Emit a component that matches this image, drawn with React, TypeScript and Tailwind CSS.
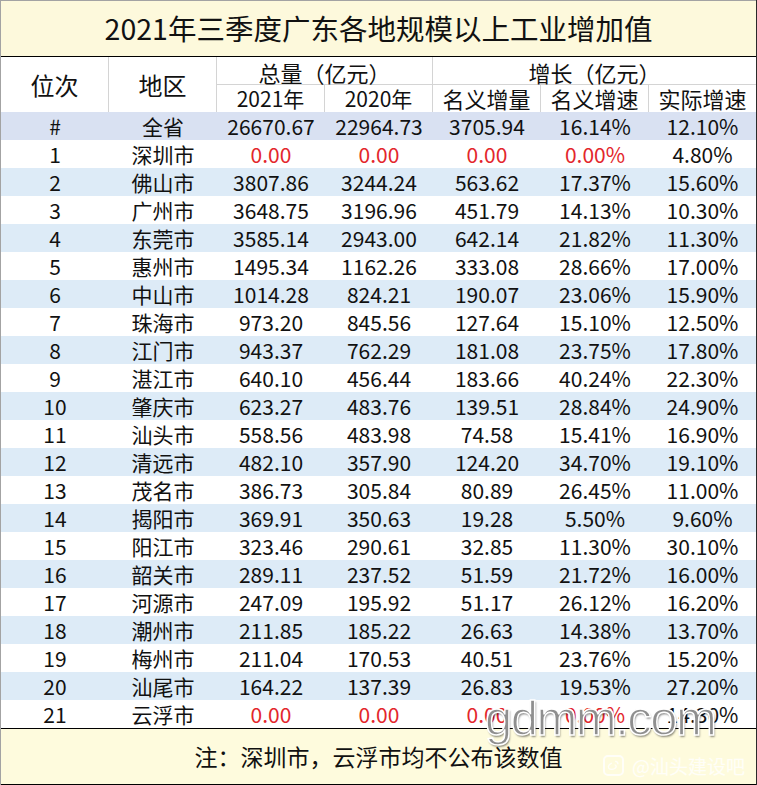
const rows: [string, string, string, string, string, string, string][] = [
    ["1", "深圳市", "0.00", "0.00", "0.00", "0.00%", "4.80%"],
    ["2", "佛山市", "3807.86", "3244.24", "563.62", "17.37%", "15.60%"],
    ["3", "广州市", "3648.75", "3196.96", "451.79", "14.13%", "10.30%"],
    ["4", "东莞市", "3585.14", "2943.00", "642.14", "21.82%", "11.30%"],
    ["5", "惠州市", "1495.34", "1162.26", "333.08", "28.66%", "17.00%"],
    ["6", "中山市", "1014.28", "824.21", "190.07", "23.06%", "15.90%"],
    ["7", "珠海市", "973.20", "845.56", "127.64", "15.10%", "12.50%"],
    ["8", "江门市", "943.37", "762.29", "181.08", "23.75%", "17.80%"],
    ["9", "湛江市", "640.10", "456.44", "183.66", "40.24%", "22.30%"],
    ["10", "肇庆市", "623.27", "483.76", "139.51", "28.84%", "24.90%"],
    ["11", "汕头市", "558.56", "483.98", "74.58", "15.41%", "16.90%"],
    ["12", "清远市", "482.10", "357.90", "124.20", "34.70%", "19.10%"],
    ["13", "茂名市", "386.73", "305.84", "80.89", "26.45%", "11.00%"],
    ["14", "揭阳市", "369.91", "350.63", "19.28", "5.50%", "9.60%"],
    ["15", "阳江市", "323.46", "290.61", "32.85", "11.30%", "30.10%"],
    ["16", "韶关市", "289.11", "237.52", "51.59", "21.72%", "16.00%"],
    ["17", "河源市", "247.09", "195.92", "51.17", "26.12%", "16.20%"],
    ["18", "潮州市", "211.85", "185.22", "26.63", "14.38%", "13.70%"],
    ["19", "梅州市", "211.04", "170.53", "40.51", "23.76%", "15.20%"],
    ["20", "汕尾市", "164.22", "137.39", "26.83", "19.53%", "27.20%"],
    ["21", "云浮市", "0.00", "0.00", "0.00", "0.00%", "14.30%"],
];

const cols = "grid grid-cols-[108px_108px_108px_108px_108px_108px_1fr]";

const DataRow = ({cells, bg, missing}: {cells: string[]; bg: string; missing?: boolean}) => (
    <div className={`${cols} h-[28px] items-center text-[21px] leading-none ${bg}`}>
        {cells.map((c, i) => (
            <div key={i}
                 className={`text-center ${missing && i >= 2 && i <= 5 ? "text-[#e3262c]" : "text-[#111]"}`}>
                {c}
            </div>
        ))}
    </div>
);

export default function App() {
    return (
        <div
            className="relative w-[757px] h-[785px] overflow-hidden bg-white border-l border-l-[#a3a3a3] border-r border-r-[#2a2a2a] font-['Noto_Sans_CJK_SC',sans-serif]">
            {/* title */}
            <div
                className="h-[57px] border-t border-t-[#a3a3a3] border-b border-b-black bg-[#fdf9dc] flex items-center justify-center text-[28.5px] text-[#111]">
                2021年三季度广东各地规模以上工业增加值
            </div>

            {/* header */}
            <div className={`${cols} grid-rows-[28px_27px] text-[#111]`}>
                <div className="row-span-2 border-r border-[#d4d4d4] flex items-center justify-center text-[24px]">位次</div>
                <div className="row-span-2 border-r border-[#d4d4d4] flex items-center justify-center text-[24px]">地区</div>
                <div className="col-span-2 border-r border-b border-[#d4d4d4] flex items-center justify-center text-[22px] pt-[3px]">总量（亿元）</div>
                <div className="col-span-3 border-b border-[#d4d4d4] flex items-center justify-center text-[22px] pt-[3px]">增长（亿元）</div>
                <div className="border-r border-[#d4d4d4] flex items-center justify-center text-[21px]">2021年</div>
                <div className="border-r border-[#d4d4d4] flex items-center justify-center text-[21px]">2020年</div>
                <div className="border-r border-[#d4d4d4] flex items-center justify-center text-[22px]">名义增量</div>
                <div className="border-r border-[#d4d4d4] flex items-center justify-center text-[22px]">名义增速</div>
                <div className="flex items-center justify-center text-[22px]">实际增速</div>
            </div>

            {/* data */}
            <DataRow cells={["#", "全省", "26670.67", "22964.73", "3705.94", "16.14%", "12.10%"]} bg="bg-[#d9e1f2]"/>
            {rows.map((r, i) => (
                <DataRow key={r[0]} cells={r} bg={i % 2 === 1 ? "bg-[#ddebf7]" : "bg-white"}
                         missing={r[2] === "0.00"}/>
            ))}

            {/* footer */}
            <div
                className="h-[57px] border-t border-b border-black bg-[#fefbdd] flex items-center justify-center text-[23px] text-[#111]">
                注：深圳市，云浮市均不公布该数值
            </div>

            {/* watermarks */}
            <div
                className="absolute left-[484px] top-[694px] text-[49px] leading-none tracking-[-1.5px] text-[#8f8f8f] font-['Liberation_Sans',sans-serif] [-webkit-text-stroke:1.5px_#ffffff] [text-shadow:1px_2px_2px_rgba(0,0,0,0.45)]">
                gdmm.com
            </div>
            <div className="absolute left-[602px] top-[755px] flex items-center gap-[8px] text-white/80">
                <div className="w-[21px] h-[21px] rounded-[5px] border-2 border-white/80 flex items-center justify-center">
                    <svg viewBox="0 0 16 16" className="w-[13px] h-[13px]" fill="none" stroke="currentColor" strokeWidth="1.6">
                        <path d="M6 5c-3 1-5 4-4 6 1 2 5 2 7 1 2-1 3-2 2-4-.3-.8-1.2-.6-1.6-.4"/>
                        <path d="M10 3c2 0 3.5 1.5 3.5 3.5"/>
                    </svg>
                </div>
                <span className="text-[19px] leading-none">@汕头建设吧</span>
            </div>
        </div>
    );
}
